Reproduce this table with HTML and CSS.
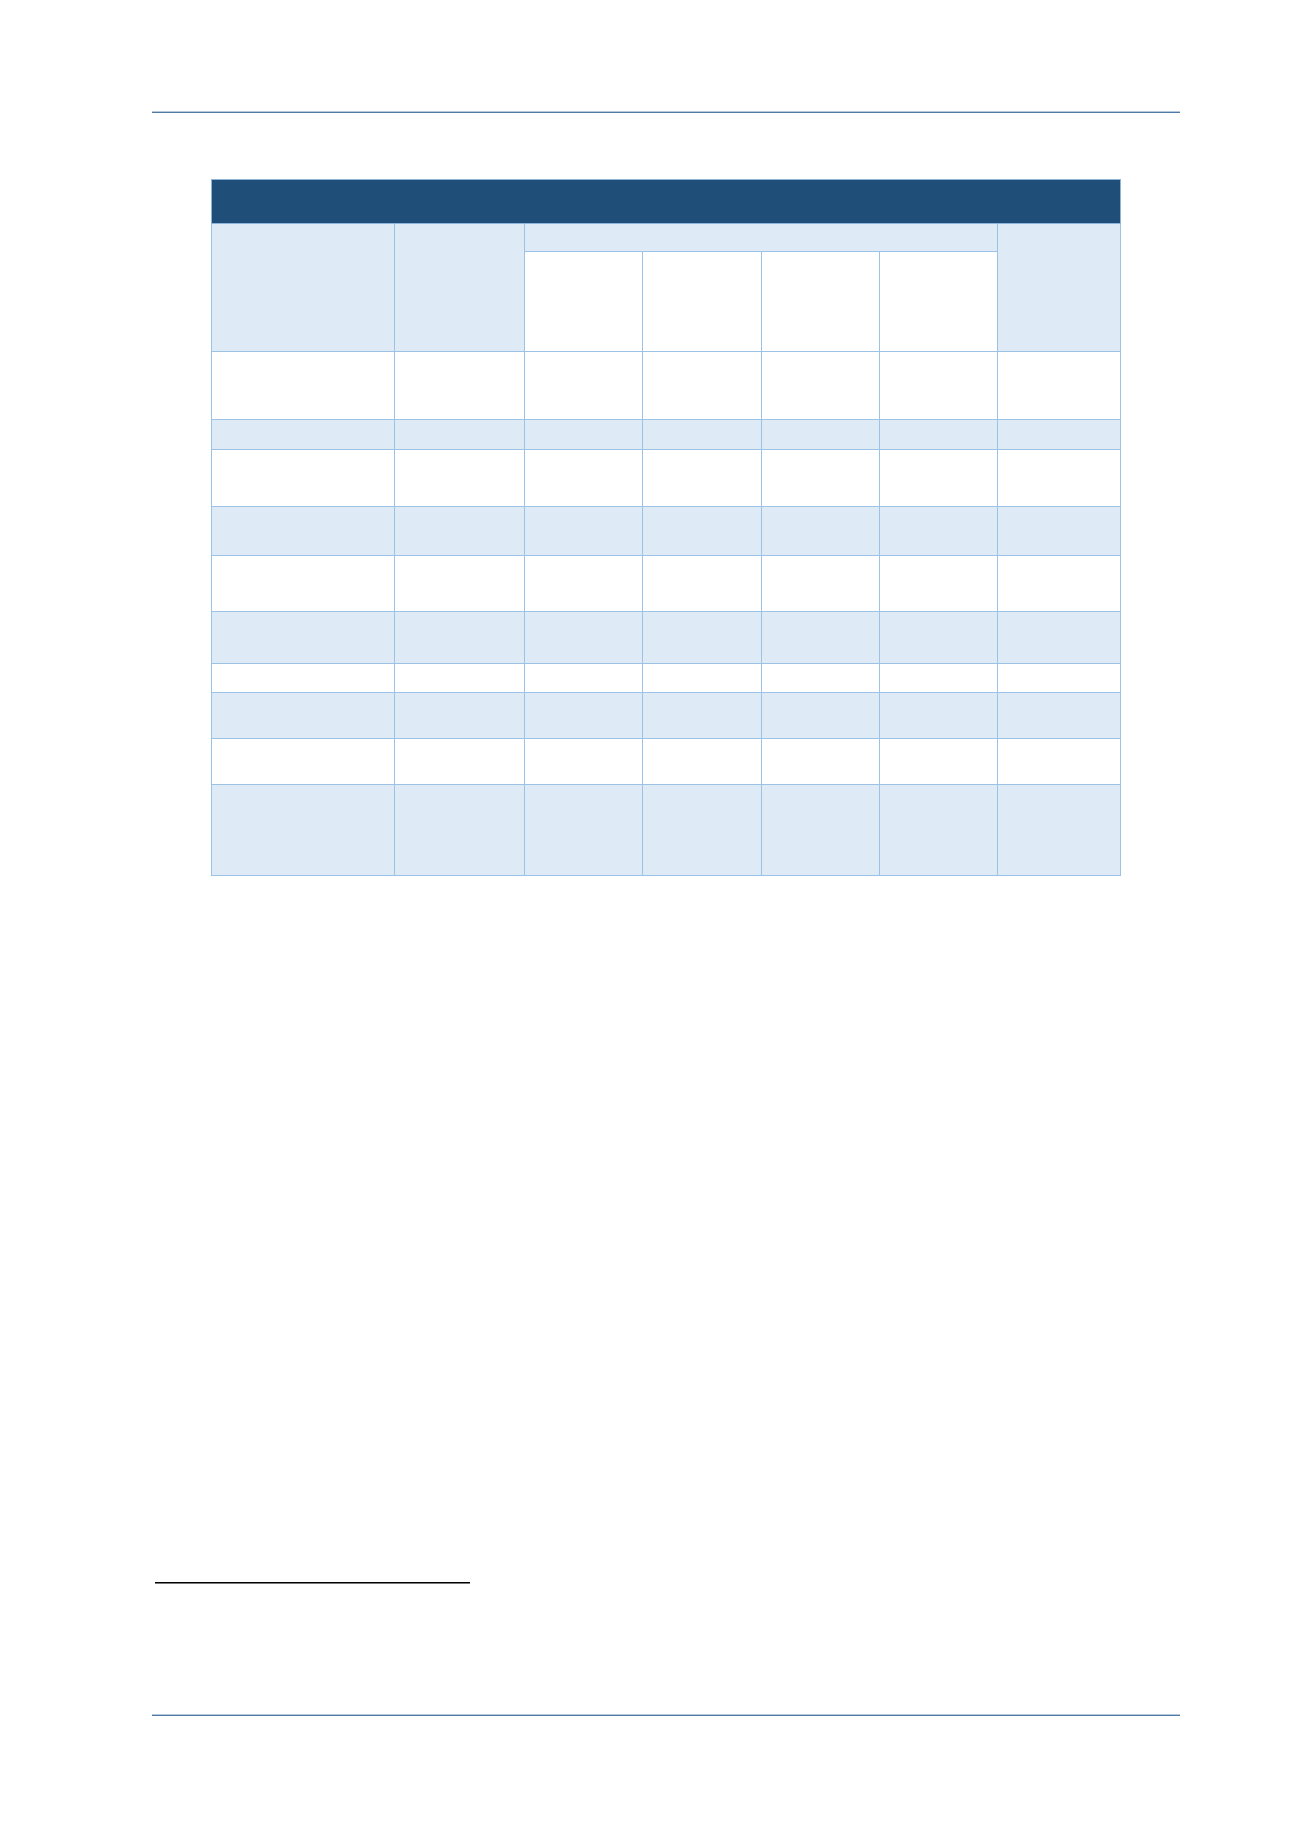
FILE: index.html
```html
<!DOCTYPE html>
<html lang="en">
<head>
<meta charset="utf-8">
<title>Table page</title>
<link rel="stylesheet" href="styles.css">
</head>
<body>
<div class="page">
  <div class="rule rule-head"></div>
  <table class="grid">
    <colgroup>
      <col class="c1"><col class="c2"><col class="c3"><col class="c3"><col class="c3"><col class="c3"><col class="c7">
    </colgroup>
    <thead>
      <tr class="r-title"><th colspan="7"></th></tr>
      <tr class="r-group">
        <th rowspan="2" class="tint"></th>
        <th rowspan="2" class="tint"></th>
        <th colspan="4" class="tint"></th>
        <th rowspan="2" class="tint"></th>
      </tr>
      <tr class="r-sub">
        <th></th><th></th><th></th><th></th>
      </tr>
    </thead>
    <tbody>
      <tr class="h68"><td></td><td></td><td></td><td></td><td></td><td></td><td></td></tr>
      <tr class="h30 tint"><td></td><td></td><td></td><td></td><td></td><td></td><td></td></tr>
      <tr class="h57"><td></td><td></td><td></td><td></td><td></td><td></td><td></td></tr>
      <tr class="h49 tint"><td></td><td></td><td></td><td></td><td></td><td></td><td></td></tr>
      <tr class="h56"><td></td><td></td><td></td><td></td><td></td><td></td><td></td></tr>
      <tr class="h52 tint"><td></td><td></td><td></td><td></td><td></td><td></td><td></td></tr>
      <tr class="h29"><td></td><td></td><td></td><td></td><td></td><td></td><td></td></tr>
      <tr class="h46 tint"><td></td><td></td><td></td><td></td><td></td><td></td><td></td></tr>
      <tr class="h46"><td></td><td></td><td></td><td></td><td></td><td></td><td></td></tr>
      <tr class="h91 tint"><td></td><td></td><td></td><td></td><td></td><td></td><td></td></tr>
    </tbody>
  </table>
  <div class="footnote-rule"></div>
  <div class="rule rule-foot"></div>
</div>
</body>
</html>
```

FILE: styles.css
```css
html, body {
  margin: 0;
  padding: 0;
  background: #ffffff;
  font-family: "Liberation Sans", Arial, sans-serif;
}

.page {
  width: 1300px;
  height: 1839px;
  box-sizing: border-box;
  padding-top: 111px;
}

.rule {
  margin-left: 152px;
  width: 1028px;
  height: 2px;
  background: linear-gradient(#b6c8dc 0 50%, #4f7aa6 50% 100%);
}

.grid {
  margin-top: 66px;
  margin-left: 211px;
  width: 910px;
  table-layout: fixed;
  border-collapse: collapse;
  border: 1px solid #b4cfea;
}

.c1 { width: 183px; }
.c2 { width: 130px; }
.c3 { width: 118px; }
.c7 { width: 123px; }

.grid th,
.grid td {
  border: 1px solid #9cc2e5;
  padding: 0;
  box-sizing: border-box;
}

.r-title th {
  background: #1f4e79;
  height: 44px;
  border-color: #8db3d9;
}

.tint,
.tint td {
  background: #deeaf6;
}

.r-group th { height: 28px; }
.r-sub th { height: 100px; background: #ffffff; }

.h68 td { height: 68px; }
.h30 td { height: 30px; }
.h29 td { height: 29px; }
.h57 td { height: 57px; }
.h49 td { height: 49px; }
.h56 td { height: 56px; }
.h52 td { height: 52px; }
.h46 td { height: 46px; }
.h91 td { height: 91px; }

.footnote-rule {
  margin-top: 706px;
  margin-left: 155px;
  width: 315px;
  height: 1px;
  background: #000000;
  box-shadow: 0 1px 0 #7a7a7a;
}

.rule-foot {
  margin-top: 131px;
}
```
